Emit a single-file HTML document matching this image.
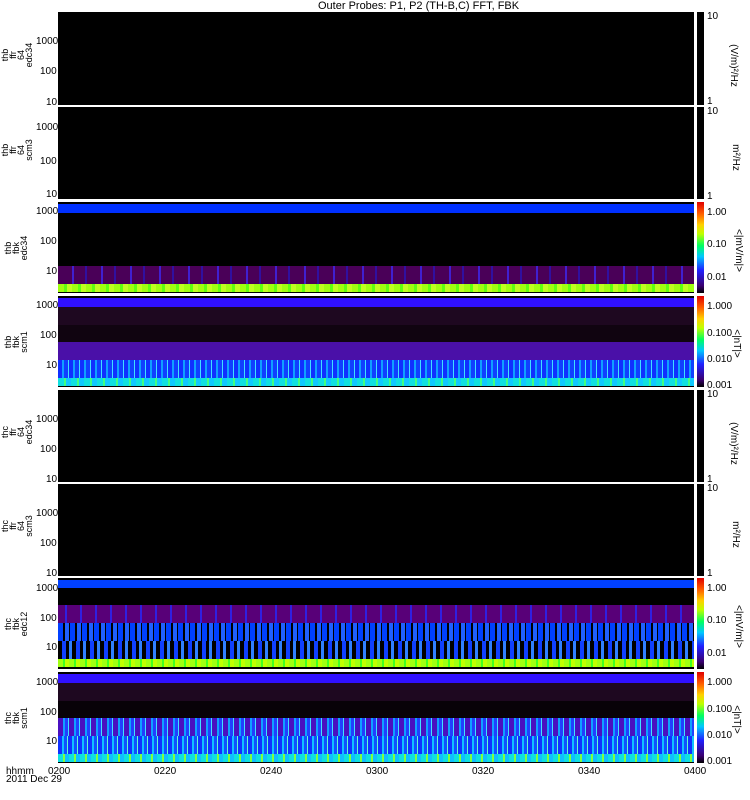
<!DOCTYPE html>
<html><head><meta charset="utf-8"><style>
body{margin:0;width:750px;height:800px;background:#fff;position:relative;overflow:hidden;font-family:"Liberation Sans",sans-serif;}
.p{position:absolute;left:58px;width:636px;background:#000;overflow:hidden}
.b{position:absolute;left:0;width:100%}
.cb{position:absolute;left:697px;width:7px}
.t{position:absolute;font-size:10px;line-height:10px;color:#000}
.rl{position:absolute;font-size:10px;transform:rotate(90deg);white-space:nowrap}
.pl{position:absolute;width:50px;height:32px;font-size:9px;line-height:8px;text-align:center;transform:rotate(-90deg);transform-origin:center}
.rain{background:linear-gradient(to top,#000 0%,#3a0070 8%,#2020ff 25%,#00c8ff 40%,#00ff60 52%,#c0ff00 65%,#ffd000 75%,#ff6000 87%,#e00000 100%)}
</style></head><body>
<div class="t" style="left:318px;top:1px;font-size:11px">Outer Probes: P1, P2 (TH-B,C) FFT, FBK</div>

<div class="p" style="top:12px;height:93px"></div>
<div class="p" style="top:107px;height:92px"></div>
<div class="p" style="top:202px;height:91px">
 <div class="b" style="top:2px;height:9px;background:#0030ff"></div>
 <div class="b" style="top:64px;height:18px;background:repeating-linear-gradient(90deg,#4a0058 0 14px,#4020d0 14px 16px,#4a0058 16px 27px,#3010a0 27px 29px);"></div>
 <div class="b" style="top:82px;height:8px;background:repeating-linear-gradient(90deg,#a0ff10 0 6px,#60ff10 6px 9px,#c0ff20 9px 14px)"></div>
</div>
<div class="p" style="top:296px;height:91px">
 <div class="b" style="top:2px;height:9px;background:#3010ff"></div>
 <div class="b" style="top:11px;height:18px;background:#1e0820"></div>
 <div class="b" style="top:29px;height:17px;background:#100410"></div>
 <div class="b" style="top:46px;height:18px;background:#4a10a8"></div>
 <div class="b" style="top:64px;height:18px;background:repeating-linear-gradient(90deg,#1030ff 0 4px,#10a0ff 4px 6px,#1040ff 6px 10px,#40e0ff 10px 11px)"></div>
 <div class="b" style="top:82px;height:8px;background:repeating-linear-gradient(90deg,#10e0e0 0 6px,#40ff80 6px 8px,#10c8ff 8px 13px)"></div>
</div>
<div class="p" style="top:390px;height:92px"></div>
<div class="p" style="top:484px;height:92px"></div>
<div class="p" style="top:578px;height:91px">
 <div class="b" style="top:2px;height:8px;background:#0040ff"></div>
 <div class="b" style="top:27px;height:18px;background:repeating-linear-gradient(90deg,#580078 0 7px,#3020e0 7px 9px,#580078 9px 15px)"></div>
 <div class="b" style="top:45px;height:18px;background:repeating-linear-gradient(90deg,#0040ff 0 5px,#000 5px 7px,#2060ff 7px 11px,#000 11px 12px)"></div>
 <div class="b" style="top:63px;height:18px;background:repeating-linear-gradient(90deg,#000 0 4px,#1040ff 4px 8px,#000 8px 11px,#3080ff 11px 14px)"></div>
 <div class="b" style="top:81px;height:8px;background:repeating-linear-gradient(90deg,#a0ff10 0 5px,#40ff20 5px 7px,#c0ff00 7px 11px)"></div>
</div>
<div class="p" style="top:672px;height:91px">
 <div class="b" style="top:2px;height:9px;background:#3010ff"></div>
 <div class="b" style="top:11px;height:18px;background:#1e0820"></div>
 <div class="b" style="top:29px;height:17px;background:#080208"></div>
 <div class="b" style="top:46px;height:18px;background:repeating-linear-gradient(90deg,#4a10c0 0 5px,#10a0ff 5px 7px,#2040ff 7px 10px,#40e0ff 10px 11px)"></div>
 <div class="b" style="top:64px;height:18px;background:repeating-linear-gradient(90deg,#1030ff 0 4px,#10c0ff 4px 6px,#1050ff 6px 9px,#60ffd0 9px 10px)"></div>
 <div class="b" style="top:82px;height:8px;background:repeating-linear-gradient(90deg,#10e0e0 0 5px,#80ff40 5px 7px,#10c0ff 7px 11px)"></div>
</div>

<div class="cb" style="top:12px;height:93px;background:#000"></div>
<div class="cb" style="top:107px;height:92px;background:#000"></div>
<div class="cb rain" style="top:202px;height:91px"></div>
<div class="cb rain" style="top:296px;height:91px"></div>
<div class="cb" style="top:390px;height:92px;background:#000"></div>
<div class="cb" style="top:484px;height:92px;background:#000"></div>
<div class="cb rain" style="top:578px;height:91px"></div>
<div class="cb rain" style="top:672px;height:91px"></div>

<div class="t" style="left:707px;top:12px">10</div><div class="t" style="left:707px;top:97px">1</div>
<div class="t" style="left:707px;top:107px">10</div><div class="t" style="left:707px;top:192px">1</div>
<div class="t" style="left:707px;top:208px">1.00</div><div class="t" style="left:707px;top:240px">0.10</div><div class="t" style="left:707px;top:273px">0.01</div>
<div class="t" style="left:707px;top:302px">1.000</div><div class="t" style="left:707px;top:329px">0.100</div><div class="t" style="left:707px;top:355px">0.010</div><div class="t" style="left:707px;top:381px">0.001</div>
<div class="t" style="left:707px;top:390px">10</div><div class="t" style="left:707px;top:475px">1</div>
<div class="t" style="left:707px;top:484px">10</div><div class="t" style="left:707px;top:569px">1</div>
<div class="t" style="left:707px;top:584px">1.00</div><div class="t" style="left:707px;top:616px">0.10</div><div class="t" style="left:707px;top:649px">0.01</div>
<div class="t" style="left:707px;top:678px">1.000</div><div class="t" style="left:707px;top:705px">0.100</div><div class="t" style="left:707px;top:731px">0.010</div><div class="t" style="left:707px;top:757px">0.001</div>
<div class="rl" style="left:712px;top:60px">(V/m)²/Hz</div>
<div class="rl" style="left:722px;top:152px">m²/Hz</div>
<div class="rl" style="left:717px;top:245px">&lt;|mV/m|&gt;</div>
<div class="rl" style="left:722px;top:338px">&lt;|nT|&gt;</div>
<div class="rl" style="left:712px;top:438px">(V/m)²/Hz</div>
<div class="rl" style="left:722px;top:529px">m²/Hz</div>
<div class="rl" style="left:717px;top:621px">&lt;|mV/m|&gt;</div>
<div class="rl" style="left:722px;top:714px">&lt;|nT|&gt;</div>

<div class="t" style="left:36px;top:37px">1000</div><div class="t" style="left:40px;top:67px">100</div><div class="t" style="left:46px;top:98px">10</div>
<div class="t" style="left:36px;top:123px">1000</div><div class="t" style="left:40px;top:157px">100</div><div class="t" style="left:46px;top:190px">10</div>
<div class="t" style="left:36px;top:207px">1000</div><div class="t" style="left:40px;top:237px">100</div><div class="t" style="left:46px;top:267px">10</div>
<div class="t" style="left:36px;top:301px">1000</div><div class="t" style="left:40px;top:331px">100</div><div class="t" style="left:46px;top:361px">10</div>
<div class="t" style="left:36px;top:415px">1000</div><div class="t" style="left:40px;top:445px">100</div><div class="t" style="left:46px;top:475px">10</div>
<div class="t" style="left:36px;top:509px">1000</div><div class="t" style="left:40px;top:539px">100</div><div class="t" style="left:46px;top:569px">10</div>
<div class="t" style="left:36px;top:584px">1000</div><div class="t" style="left:40px;top:614px">100</div><div class="t" style="left:46px;top:643px">10</div>
<div class="t" style="left:36px;top:678px">1000</div><div class="t" style="left:40px;top:708px">100</div><div class="t" style="left:46px;top:737px">10</div>

<div class="pl" style="left:-8px;top:39px">thb<br>ffr<br>64<br>edc34</div>
<div class="pl" style="left:-8px;top:134px">thb<br>ffr<br>64<br>scm3</div>
<div class="pl" style="left:-5px;top:232px">thb<br>fbk<br>edc34</div>
<div class="pl" style="left:-5px;top:326px">thb<br>fbk<br>scm1</div>
<div class="pl" style="left:-8px;top:416px">thc<br>ffr<br>64<br>edc34</div>
<div class="pl" style="left:-8px;top:510px">thc<br>ffr<br>64<br>scm3</div>
<div class="pl" style="left:-5px;top:608px">thc<br>fbk<br>edc12</div>
<div class="pl" style="left:-5px;top:702px">thc<br>fbk<br>scm1</div>

<div class="t" style="left:6px;top:767px">hhmm</div>
<div class="t" style="left:6px;top:775px">2011 Dec 29</div>
<div class="t" style="left:48px;top:767px">0200</div>
<div class="t" style="left:154px;top:767px">0220</div>
<div class="t" style="left:260px;top:767px">0240</div>
<div class="t" style="left:366px;top:767px">0300</div>
<div class="t" style="left:472px;top:767px">0320</div>
<div class="t" style="left:578px;top:767px">0340</div>
<div class="t" style="left:684px;top:767px">0400</div>
</body></html>
